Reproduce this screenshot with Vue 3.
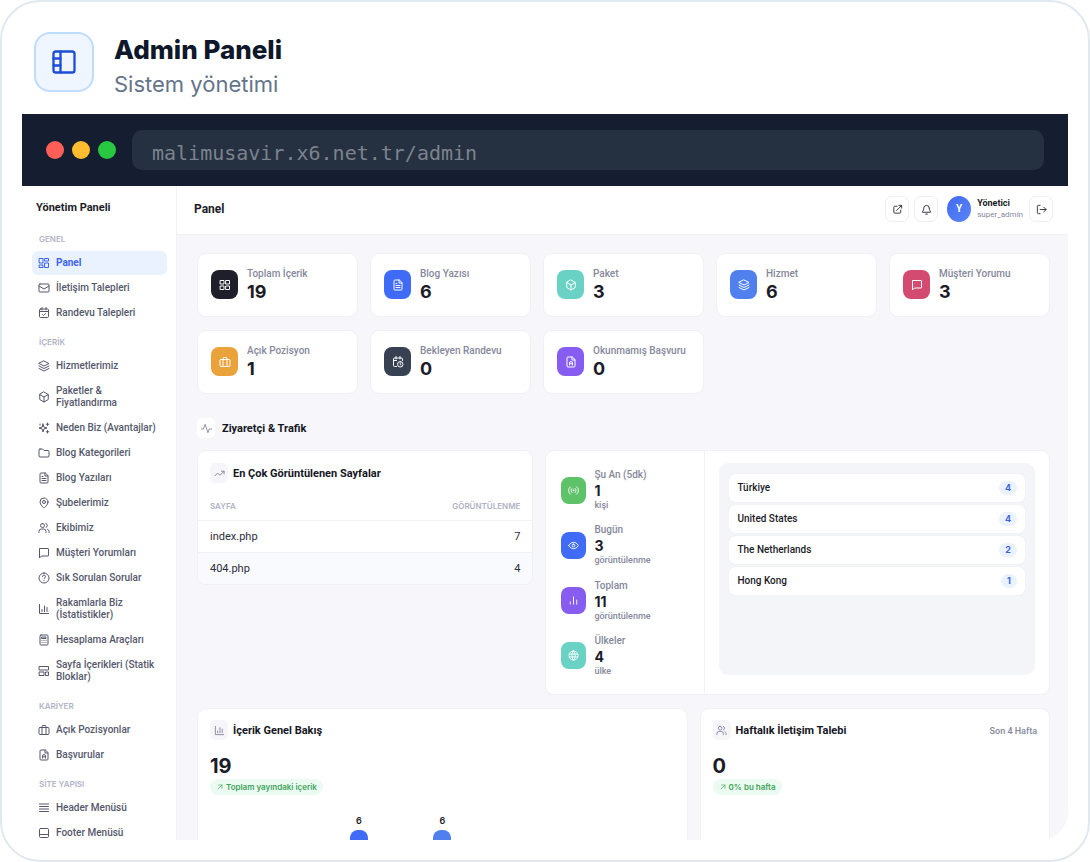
<script setup>
import { h } from 'vue'

const icons = {
  brand: ['M5 3h14a2 2 0 0 1 2 2v14a2 2 0 0 1-2 2H5a2 2 0 0 1-2-2V5a2 2 0 0 1 2-2z', 'M9 3v18', 'M3 9h6', 'M3 15h6'],
  dashboard: ['M3 3h7v9H3z', 'M14 3h7v5h-7z', 'M14 12h7v9h-7z', 'M3 16h7v5H3z'],
  mail: ['M4 4h16a2 2 0 0 1 2 2v12a2 2 0 0 1-2 2H4a2 2 0 0 1-2-2V6a2 2 0 0 1 2-2z', 'M2 8l10 6 10-6'],
  calendar: ['M5 4h14a2 2 0 0 1 2 2v13a2 2 0 0 1-2 2H5a2 2 0 0 1-2-2V6a2 2 0 0 1 2-2z', 'M8 1v5', 'M16 1v5', 'M3 9h18', 'M9 15l2 2 4-4'],
  layers: ['M12 2l10 5-10 5L2 7z', 'M2 12l10 5 10-5', 'M2 17l10 5 10-5'],
  box: ['M12 2l8.500 5v10L12 22l-8.500-5V7z', 'M3.500 7L12 12l8.500-5', 'M12 12v10'],
  sparkle: ['M10 4l1.800 6.200L18 12l-6.200 1.800L10 20l-1.800-6.200L2 12l6.200-1.800z', 'M19 2v5', 'M16.500 4.500h5', 'M19 17v5', 'M16.500 19.500h5', 'M4 4v2'],
  folder: ['M4 4h5l3 3h8a2 2 0 0 1 2 2v9a2 2 0 0 1-2 2H4a2 2 0 0 1-2-2V6a2 2 0 0 1 2-2z'],
  file: ['M14 2H6a2 2 0 0 0-2 2v16a2 2 0 0 0 2 2h12a2 2 0 0 0 2-2V8z', 'M14 2v6h6', 'M8 9h2', 'M8 13h8', 'M8 17h8'],
  pin: ['M20 10c0 6-8 12-8 12s-8-6-8-12a8 8 0 0 1 16 0z', 'M12 7a3 3 0 1 0 0 6 3 3 0 0 0 0-6z'],
  users: ['M9 3a4 4 0 1 0 0 8 4 4 0 0 0 0-8z', 'M2 21v-2a5 5 0 0 1 5-5h4a5 5 0 0 1 5 5v2', 'M16 3.200a4 4 0 0 1 0 7.600', 'M19 14.500a5 5 0 0 1 3 4.500v2'],
  chat: ['M4 3h16a1 1 0 0 1 1 1v13a1 1 0 0 1-1 1H7l-4 4V4a1 1 0 0 1 1-1z'],
  help: ['M12 2a10 10 0 1 0 0 20 10 10 0 0 0 0-20z', 'M9 9a3 3 0 1 1 4 3c-.7.300-1 .8-1 1.500', 'M12 17v.1'],
  chart: ['M3 3v18h18', 'M8 17v-4', 'M13 17V6', 'M18 17V9'],
  calc: ['M6 2h12a2 2 0 0 1 2 2v16a2 2 0 0 1-2 2H6a2 2 0 0 1-2-2V4a2 2 0 0 1 2-2z', 'M8 6h8v3H8z', 'M8 13v.1', 'M12 13v.1', 'M16 13v.1', 'M8 17v.1', 'M12 17v.1', 'M16 17v.1'],
  blocks: ['M3 3h18v7H3z', 'M3 14h9v7H3z', 'M16 14h5v7h-5z'],
  briefcase: ['M4 7h16a2 2 0 0 1 2 2v10a2 2 0 0 1-2 2H4a2 2 0 0 1-2-2V9a2 2 0 0 1 2-2z', 'M8 21V5a2 2 0 0 1 2-2h4a2 2 0 0 1 2 2v16'],
  resume: ['M14 2H6a2 2 0 0 0-2 2v16a2 2 0 0 0 2 2h12a2 2 0 0 0 2-2V8z', 'M14 2v6h6', 'M9 18v-4a3 3 0 0 1 6 0v4', 'M9 15.500h6'],
  menu: ['M3 4h18', 'M3 9h18', 'M3 14h18', 'M3 19h18'],
  footer: ['M5 3h14a2 2 0 0 1 2 2v14a2 2 0 0 1-2 2H5a2 2 0 0 1-2-2V5a2 2 0 0 1 2-2z', 'M3 15h18'],
  grid: ['M3 3h7v7H3z', 'M14 3h7v7h-7z', 'M3 14h7v7H3z', 'M14 14h7v7h-7z'],
  calclock: ['M21 9V6a2 2 0 0 0-2-2H5a2 2 0 0 0-2 2v13a2 2 0 0 0 2 2h4', 'M8 1v5', 'M16 1v5', 'M3 9h6', 'M16.500 11a5.500 5.500 0 1 0 0 11 5.500 5.500 0 0 0 0-11z', 'M16.500 14v3l1.500 1'],
  pulse: ['M1 13h4l4-10 6 18 3-8h5'],
  trend: ['M2 17l6-6 5 5 9-9', 'M16 7h6v6'],
  signal: ['M12 11a1 1 0 1 0 0 2 1 1 0 0 0 0-2z', 'M8.500 7.500a6 6 0 0 0 0 9', 'M15.500 7.500a6 6 0 0 1 0 9', 'M5 4a10 10 0 0 0 0 16', 'M19 4a10 10 0 0 1 0 16'],
  eye: ['M1.500 12S5 5 12 5s10.500 7 10.500 7-3.500 7-10.500 7S1.500 12 1.500 12z', 'M12 9a3 3 0 1 0 0 6 3 3 0 0 0 0-6z'],
  bars: ['M5 20v-5', 'M12 20V4', 'M19 20v-9'],
  globe: ['M12 2a10 10 0 1 0 0 20 10 10 0 0 0 0-20z', 'M12 2c-5 5-5 15 0 20', 'M12 2c5 5 5 15 0 20', 'M3 9h18', 'M3 15h18'],
  arrow: ['M6 18L18 6', 'M8 6h10v10'],
  external: ['M11 5H6a2 2 0 0 0-2 2v11a2 2 0 0 0 2 2h11a2 2 0 0 0 2-2v-5', 'M15 3h6v6', 'M10 14L21 3'],
  bell: ['M18 9A6 6 0 0 0 6 9c0 6-3 7-3 9h18c0-2-3-3-3-9', 'M10 22h4'],
  logout: ['M9 3H5a2 2 0 0 0-2 2v14a2 2 0 0 0 2 2h4', 'M9 12h13', 'M17 7l5 5-5 5']
}

const Icon = (props) =>
  h('svg', { viewBox: '0 0 24 24', fill: 'none', stroke: 'currentColor', 'stroke-width': 2, 'stroke-linecap': 'round', 'stroke-linejoin': 'round', 'aria-hidden': 'true' },
    icons[props.name].map((d) => h('path', { d })))
Icon.props = ['name']

const menu = [
  { title: 'GENEL', items: [['dashboard', 'Panel'], ['mail', 'İletişim Talepleri'], ['calendar', 'Randevu Talepleri']] },
  {
    title: 'İÇERİK',
    items: [['layers', 'Hizmetlerimiz'], ['box', 'Paketler & Fiyatlandırma'], ['sparkle', 'Neden Biz (Avantajlar)'], ['folder', 'Blog Kategorileri'],
      ['file', 'Blog Yazıları'], ['pin', 'Şubelerimiz'], ['users', 'Ekibimiz'], ['chat', 'Müşteri Yorumları'], ['help', 'Sık Sorulan Sorular'],
      ['chart', 'Rakamlarla Biz (İstatistikler)'], ['calc', 'Hesaplama Araçları'], ['blocks', 'Sayfa İçerikleri (Statik Bloklar)']]
  },
  { title: 'KARİYER', items: [['briefcase', 'Açık Pozisyonlar'], ['resume', 'Başvurular']] },
  { title: 'SİTE YAPISI', items: [['menu', 'Header Menüsü'], ['footer', 'Footer Menüsü']] }
]

const cards = [
  ['grid', 'Toplam İçerik', 19, 'black'], ['file', 'Blog Yazısı', 6, 'blue'], ['box', 'Paket', 3, 'teal'], ['layers', 'Hizmet', 6, 'azure'],
  ['chat', 'Müşteri Yorumu', 3, 'rose'], ['briefcase', 'Açık Pozisyon', 1, 'amber'], ['calclock', 'Bekleyen Randevu', 0, 'slate'], ['resume', 'Okunmamış Başvuru', 0, 'violet']
]

const visits = [
  ['signal', 'Şu An (5dk)', 1, 'kişi', 'green'], ['eye', 'Bugün', 3, 'görüntülenme', 'blue'],
  ['bars', 'Toplam', 11, 'görüntülenme', 'violet'], ['globe', 'Ülkeler', 4, 'ülke', 'teal']
]

const pages = [['index.php', 7], ['404.php', 4]]
const countries = [['Türkiye', 4], ['United States', 4], ['The Netherlands', 2], ['Hong Kong', 1]]
const bars = [null, { value: 6, tone: 'blue' }, { value: 6, tone: 'azure' }, null, null]
</script>

<template>
  <article class="frame">
    <header class="intro">
      <span class="brand"><Icon name="brand" /></span>
      <div>
        <h1>Admin Paneli</h1>
        <p>Sistem yönetimi</p>
      </div>
    </header>

    <section class="browser">
      <div class="chrome">
        <i class="dot red"></i><i class="dot yellow"></i><i class="dot lime"></i>
        <input class="url" type="text" aria-label="Adres" value="malimusavir.x6.net.tr/admin" readonly />
      </div>

      <div class="app">
        <aside class="side">
          <h2>Yönetim Paneli</h2>
          <nav>
            <template v-for="group in menu" :key="group.title">
              <h3>{{ group.title }}</h3>
              <a v-for="[icon, text] in group.items" :key="text" href="#" :class="{ active: text === 'Panel' }">
                <Icon :name="icon" /><span>{{ text }}</span>
              </a>
            </template>
          </nav>
        </aside>

        <div class="main">
          <header class="top">
            <h2>Panel</h2>
            <button type="button" aria-label="Siteyi aç"><Icon name="external" /></button>
            <button type="button" aria-label="Bildirimler"><Icon name="bell" /></button>
            <span class="avatar">Y</span>
            <div class="who"><b>Yönetici</b><span>super_admin</span></div>
            <button type="button" aria-label="Çıkış"><Icon name="logout" /></button>
          </header>

          <div class="content">
            <div class="cards">
              <div v-for="[icon, label, value, tone] in cards" :key="label" class="card stat">
                <span class="tile" :class="tone"><Icon :name="icon" /></span>
                <div><span class="label">{{ label }}</span><strong>{{ value }}</strong></div>
              </div>
            </div>

            <div class="section"><span class="chip white"><Icon name="pulse" /></span><h3>Ziyaretçi &amp; Trafik</h3></div>

            <div class="traffic">
              <section class="card pages">
                <div class="head"><span class="chip"><Icon name="trend" /></span><h3>En Çok Görüntülenen Sayfalar</h3></div>
                <table>
                  <thead><tr><th scope="col">SAYFA</th><th scope="col">GÖRÜNTÜLENME</th></tr></thead>
                  <tbody><tr v-for="[page, count] in pages" :key="page"><td>{{ page }}</td><td>{{ count }}</td></tr></tbody>
                </table>
              </section>

              <section class="card geo">
                <div class="visits">
                  <div v-for="[icon, label, value, unit, tone] in visits" :key="label" class="visit">
                    <span class="tile small" :class="tone"><Icon :name="icon" /></span>
                    <div><span class="label">{{ label }}</span><strong>{{ value }}</strong><span class="label unit">{{ unit }}</span></div>
                  </div>
                </div>
                <div class="map">
                  <ul>
                    <li v-for="[country, count] in countries" :key="country"><span>{{ country }}</span><b>{{ count }}</b></li>
                  </ul>
                </div>
              </section>
            </div>

            <div class="bottom">
              <section class="card">
                <div class="head"><span class="chip"><Icon name="chart" /></span><h3>İçerik Genel Bakış</h3></div>
                <strong class="total">19</strong>
                <span class="pill"><Icon name="arrow" />Toplam yayındaki içerik</span>
                <div class="chart">
                  <div v-for="(bar, i) in bars" :key="i" class="col">
                    <template v-if="bar"><span>{{ bar.value }}</span><i :class="bar.tone" :style="{ height: bar.value * 20 + 'px' }"></i></template>
                  </div>
                </div>
              </section>
              <section class="card">
                <div class="head"><span class="chip"><Icon name="users" /></span><h3>Haftalık İletişim Talebi</h3><span class="label">Son 4 Hafta</span></div>
                <strong class="total">0</strong>
                <span class="pill"><Icon name="arrow" />0% bu hafta</span>
              </section>
            </div>
          </div>
        </div>
      </div>
    </section>
  </article>
</template>

<style>
body { margin: 0; background: #fff; }
</style>

<style scoped>
* { box-sizing: border-box; margin: 0; padding: 0; }
.frame {
  height: 100vh; display: flex; flex-direction: column; padding: 30px 20px 20px;
  border: 2px solid #e2e8f0; border-radius: 40px; background: #fff; overflow: hidden;
  font-family: Inter, "Liberation Sans", sans-serif; font-size: 10px; line-height: 12px; color: #1c1c28;
}
svg { width: 12px; height: 12px; flex: none; display: block; }
.intro { display: flex; gap: 20px; padding: 0 12px; height: 82px; flex: none; }
.brand { width: 60px; height: 60px; flex: none; display: grid; place-items: center; border: 2px solid #bfdbfe; border-radius: 16px; background: #eff6ff; color: #1d4ed8; }
.brand svg { width: 28px; height: 28px; }
.intro h1 { font-size: 26px; line-height: 36px; font-weight: 800; color: #0f172a; }
.intro p { font-size: 22px; line-height: 32px; color: #64748b; }

.browser { flex: 1; min-height: 0; display: flex; flex-direction: column; overflow: hidden; border-radius: 0 0 28px 28px; }
.chrome { height: 72px; flex: none; display: flex; align-items: center; gap: 8px; padding: 0 24px; background: #141e30; }
.dot { width: 18px; height: 18px; border-radius: 50%; }
.red { background: #ff5f57; } .yellow { background: #febc2e; } .lime { background: #28c840; }
.url { flex: 1; min-width: 0; height: 40px; margin-left: 8px; padding: 6px 20px 0; border: 0; border-radius: 10px; background: #253041; color: #7c838d; font: 20px "DejaVu Sans Mono", monospace; }

.app { flex: 1; min-height: 0; display: flex; overflow: hidden; font-family: Roboto, Inter, sans-serif; }
.side { width: 155px; flex: none; padding: 15px 9px 0 10px; border-right: 1px solid #f1f2f6; }
.side h2 { padding: 0 4px; font-size: 11px; line-height: 14px; font-weight: 700; }
.side nav { display: flex; flex-direction: column; gap: 1px; padding-top: 8px; }
.side h3 { margin: 10px 7px 5px; font: 600 8px/12px Inter, sans-serif; color: #b0b3c6; }
.side a { display: flex; align-items: center; gap: 6px; padding: 6px; border-radius: 6px; color: #55586b; font-weight: 500; text-decoration: none; }
.side a.active { background: #eaf1ff; color: #3b63f0; font-weight: 700; }

.main { flex: 1; min-width: 0; background: #f6f6fb; }
.top { height: 49px; display: flex; align-items: center; gap: 5px; padding: 0 15px 2px 17px; border-bottom: 1px solid #f0f0f5; background: #fff; }
.top h2 { flex: 1; font-size: 12px; font-weight: 700; }
.top button { width: 24px; height: 26px; display: grid; place-items: center; border: 1px solid #ededf3; border-radius: 7px; background: #fff; color: #2c2d3a; }
.top svg { width: 11px; height: 11px; }
.avatar { width: 24px; height: 26px; margin-left: 4px; display: grid; place-items: center; border-radius: 50%; background: linear-gradient(135deg, #4169ee, #5b86fa); color: #fff; font-weight: 700; }
.who { display: flex; flex-direction: column; margin: 0 1px; line-height: 11px; }
.who b { font-size: 9px; font-weight: 700; }
.who span { font-size: 8px; color: #85889c; }

.content { padding: 18px 18px 0 20px; }
.card { min-width: 0; border: 1px solid #f0f0f5; border-radius: 9px; background: #fff; }
.cards { display: grid; grid-template-columns: repeat(5, 1fr); gap: 13px 12px; }
.stat { display: flex; align-items: center; gap: 9px; height: 64px; padding: 0 13px 1px; }
.stat strong { font: 700 18px/22px Inter, sans-serif; }
.stat .label { line-height: 14px; }
.stat div { display: flex; flex-direction: column; white-space: nowrap; }
.label { font-size: 10px; color: #85889c; font-weight: 500; }
.tile { width: 27px; height: 29px; flex: none; display: grid; place-items: center; border-radius: 8px; color: #fff; }
.tile.small { width: 25px; height: 27px; }
.tile.small svg { width: 11px; height: 11px; }
.black { background: #1e1f2b; } .blue { background: #3f6bf6; } .teal { background: #69d2c5; } .azure { background: #4f80ee; }
.rose { background: #d34b70; } .amber { background: #eaa23a; } .slate { background: #384152; } .violet { background: #865df0; } .green { background: #5ec269; }

.section { display: flex; align-items: center; gap: 7px; padding: 24px 0 12px; }
h3 { font-size: 11px; line-height: 14px; font-weight: 700; color: #15161f; }
.section h3, .head h3, .head .label { padding-top: 2px; }
.chip { width: 18px; height: 20px; flex: none; display: grid; place-items: center; border-radius: 5px; background: #f5f5fa; color: #85889c; }
.chip.white { background: #fff; }
.chip svg { width: 11px; height: 11px; }

.traffic { display: grid; grid-template-columns: 2fr 3fr; gap: 12px; align-items: start; }
.head { display: flex; align-items: center; gap: 5px; padding: 12px; }
.head h3 { flex: 1; white-space: nowrap; }
.head .label { font-size: 9px; }
.pages { overflow: hidden; }
.pages .head { padding-bottom: 10px; }
table { width: 100%; border-collapse: collapse; }
th { height: 27px; padding: 0 12px; text-align: left; font: 600 8px/12px Inter, sans-serif; color: #b0b3c6; }
td { height: 32px; padding: 2px 12px 0; border-top: 1px solid #f0f0f5; font-size: 11px; color: #2c2d3a; }
th:last-child, td:last-child { text-align: right; }
tbody tr:last-child { background: #f9fafe; }

.geo { display: flex; height: 245px; }
.visits { width: 159px; display: flex; flex-direction: column; justify-content: space-between; padding: 17px 15px 16px; border-right: 1px solid #f0f0f5; }
.visit { display: flex; gap: 8px; align-items: center; }
.visit div { display: flex; flex-direction: column; }
.visit strong { font: 700 14px/17px Inter, sans-serif; }
.visit .label { line-height: 14px; }
.visit .unit { font-size: 9px; line-height: 13px; }
.map { flex: 1; min-width: 0; margin: 12px 14px 19px; padding: 11px 10px; border-radius: 9px; background: #f4f5f9; }
ul { list-style: none; display: flex; flex-direction: column; gap: 3px; }
li { display: flex; align-items: center; justify-content: space-between; height: 28px; padding: 0 8px; border-radius: 6px; background: #fff; box-shadow: 0 0 1px #d8dae4; font-weight: 500; }
li b { padding: 1px 6px; border-radius: 7px; background: #eaf1ff; color: #3b63e0; font: 700 9px/12px Inter, sans-serif; }

.bottom { display: grid; grid-template-columns: 7fr 5fr; gap: 12px; margin-top: 13px; }
.bottom .head { padding-top: 11px; }
.total { display: block; padding: 1px 12px 0; font: 700 20px/26px Inter, sans-serif; }
.pill { display: inline-flex; align-items: center; gap: 2px; margin-left: 12px; padding: 1px 6px; border-radius: 8px; background: #ecfbf1; color: #41a45c; font: 600 8px/14px Inter, sans-serif; vertical-align: top; }
.pill svg { width: 8px; height: 8px; }
.chart { display: grid; grid-template-columns: repeat(5, 1fr); align-items: end; height: 155px; margin: 0 36px; }
.col { display: flex; flex-direction: column; align-items: center; gap: 3px; font: 600 9px/12px Inter, sans-serif; }
.col i { width: 18px; border-radius: 8px 8px 0 0; }
</style>
